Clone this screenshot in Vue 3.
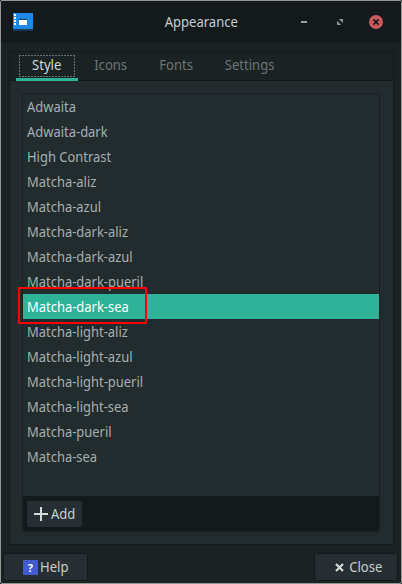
<script setup>
import { ref } from 'vue'

const tabs = ['Style', 'Icons', 'Fonts', 'Settings']
const activeTab = ref('Style')
const themes = [
  'Adwaita', 'Adwaita-dark', 'High Contrast', 'Matcha-aliz', 'Matcha-azul',
  'Matcha-dark-aliz', 'Matcha-dark-azul', 'Matcha-dark-pueril', 'Matcha-dark-sea',
  'Matcha-light-aliz', 'Matcha-light-azul', 'Matcha-light-pueril', 'Matcha-light-sea',
  'Matcha-pueril', 'Matcha-sea',
]
const selected = ref('Matcha-dark-sea')
</script>

<template>
  <div class="window">
    <header class="titlebar">
      <svg class="app-icon" width="20" height="18" viewBox="0 0 20 18" shape-rendering="crispEdges">
        <rect width="20" height="17" fill="#1e88e5" />
        <rect y="16" width="20" height="2" fill="#1c3850" />
        <path d="M1 1h2v2H1zM1 4h2v2H1zM1 7h2v2H1zM1 10h2v2H1z" fill="#fff" />
        <rect x="6" y="6" width="8" height="6" fill="#fff" />
        <rect x="6" y="6" width="8" height="1" fill="#163f68" />
      </svg>
      <h1 class="title"><span class="text">Appearance</span></h1>
      <div class="controls">
        <svg width="6" height="2" viewBox="0 0 6 2"><rect width="6" height="2" fill="#9aa3a1" /></svg>
        <svg width="6" height="6" viewBox="0 0 6 6"><path d="M1.8 0H6v4.2zM0 1.8V6h4.2z" fill="#8b9593" /></svg>
        <svg width="14" height="14" viewBox="0 0 14 14">
          <circle cx="7" cy="7" r="7" fill="#cc575d" />
          <path d="M4.4 4.4l5.2 5.2M9.6 4.4l-5.2 5.2" stroke="#14191b" stroke-width="1.7" />
        </svg>
      </div>
    </header>

    <main class="notebook">
      <nav class="tabs">
        <button
          v-for="tab in tabs" :key="tab" class="tab"
          :class="{ active: tab === activeTab }" @click="activeTab = tab"
        ><span class="focus"><span class="text">{{ tab }}</span></span></button>
      </nav>
      <section class="page">
        <div class="list-frame">
          <ul class="list">
            <li
              v-for="theme in themes" :key="theme" class="row"
              :class="{ selected: theme === selected }" @click="selected = theme"
            ><span class="text">{{ theme }}</span><i v-if="theme === selected" class="marker"></i></li>
          </ul>
          <div class="toolbar">
            <button class="button add">
              <svg width="14" height="14" viewBox="0 0 14 14"><path d="M7 0v14M0 7h14" stroke="#d3dad8" stroke-width="2" /></svg>
              <span class="text">Add</span>
            </button>
          </div>
        </div>
      </section>
    </main>

    <footer class="actions">
      <button class="button help">
        <span class="help-icon">?</span><span class="text">Help</span>
      </button>
      <button class="button close">
        <svg width="9" height="9" viewBox="0 0 9 9"><path d="M1 1l7 7M8 1L1 8" stroke="#d3dad8" stroke-width="2.2" /></svg>
        <span class="text">Close</span>
      </button>
    </footer>
  </div>
</template>

<style>
body {
  background: #14191b;
}
</style>

<style scoped>
* {
  box-sizing: border-box;
}
.window {
  width: 402px;
  height: 584px;
  display: flex;
  flex-direction: column;
  border: 1px solid #949796;
  border-radius: 2px;
  background: #1b2224;
  color: #c6cfcd;
  font: 14px/18px "Noto Sans", sans-serif;
}
.text {
  display: inline-block;
  transform: scaleX(0.932);
}
.titlebar {
  height: 42px;
  flex: none;
  display: grid;
  grid-template-columns: 100px 1fr 100px;
  align-items: center;
  background: #14191b;
}
.app-icon {
  margin-left: 12px;
}
.title {
  margin: 0;
  font-size: 14px;
  font-weight: 400;
  text-align: center;
}
.controls {
  display: flex;
  align-items: center;
  justify-content: flex-end;
  gap: 30px;
  padding-right: 18px;
}
.controls svg:last-child {
  margin-left: -4px;
}
.notebook {
  width: 385px;
  height: 494px;
  flex: none;
  margin: 8px 0 0 8px;
  display: flex;
  flex-direction: column;
  border: 1px solid #141a1c;
  border-radius: 2px;
}
.tabs {
  height: 29px;
  flex: none;
  display: flex;
  padding-left: 6px;
  border-bottom: 1px solid #141a1c;
}
.tab {
  height: 29px;
  padding: 3px;
  border: 0;
  border-bottom: 3px solid transparent;
  background: none;
  color: #6b7674;
  font: inherit;
}
.tab:first-child {
  width: 62px;
}
.tab:nth-child(2) {
  width: 65px;
}
.tab:nth-child(3) {
  width: 66px;
}
.tab:nth-child(4) {
  width: 82px;
}
.focus {
  display: flex;
  justify-content: center;
  height: 22px;
  padding-top: 1px;
  line-height: 18px;
}
.tab.active {
  color: #d3dad8;
  border-bottom-color: #2eb398;
}
.tab.active .focus {
  --h: repeating-linear-gradient(90deg, #697170 0 2px, transparent 2px 3px);
  --v: repeating-linear-gradient(#697170 0 2px, transparent 2px 3px);
  background:
    var(--h) top / 100% 1px no-repeat,
    var(--h) bottom / 100% 1px no-repeat,
    var(--v) left / 1px 100% no-repeat,
    var(--v) right / 1px 100% no-repeat;
}
.page {
  flex: 1;
  padding: 12px;
  background: #222b2e;
}
.list-frame {
  width: 358px;
  height: 439px;
  display: flex;
  flex-direction: column;
  border: 1px solid #182023;
  border-radius: 3px;
}
.list {
  flex: 1;
  margin: 0;
  padding: 0;
  list-style: none;
}
.row {
  position: relative;
  height: 25px;
  padding-left: 4px;
  line-height: 25px;
  color: #a5b0ae;
}
.row .text {
  transform: scaleX(0.925);
  transform-origin: left;
}
.row.selected {
  background: #2eb398;
  color: #fff;
}
.marker {
  position: absolute;
  left: -5px;
  top: -7px;
  width: 129px;
  height: 37px;
  border: 2px solid #f00;
  border-radius: 1px;
}
.toolbar {
  height: 35px;
  flex: none;
  padding: 4px 3px;
  background: #14191b;
}
.button {
  display: flex;
  align-items: center;
  justify-content: center;
  border: 1px solid #141a1c;
  border-radius: 3px;
  padding: 0;
  background: #262e33;
  color: #c6cfcd;
  font: inherit;
}
.add {
  width: 57px;
  height: 28px;
  gap: 2px;
  padding-left: 2px;
}
.actions {
  display: flex;
  justify-content: space-between;
  padding: 8px 3px 0 2px;
}
.help {
  width: 85px;
  height: 28px;
  gap: 1px;
}
.close {
  width: 84px;
  height: 28px;
  gap: 4px;
  padding-left: 6px;
}
.help-icon {
  width: 15px;
  height: 15px;
  margin-left: 1px;
  background: #425bd0;
  color: #fff;
  font: bold 11px/15px "Noto Sans", sans-serif;
}
</style>
